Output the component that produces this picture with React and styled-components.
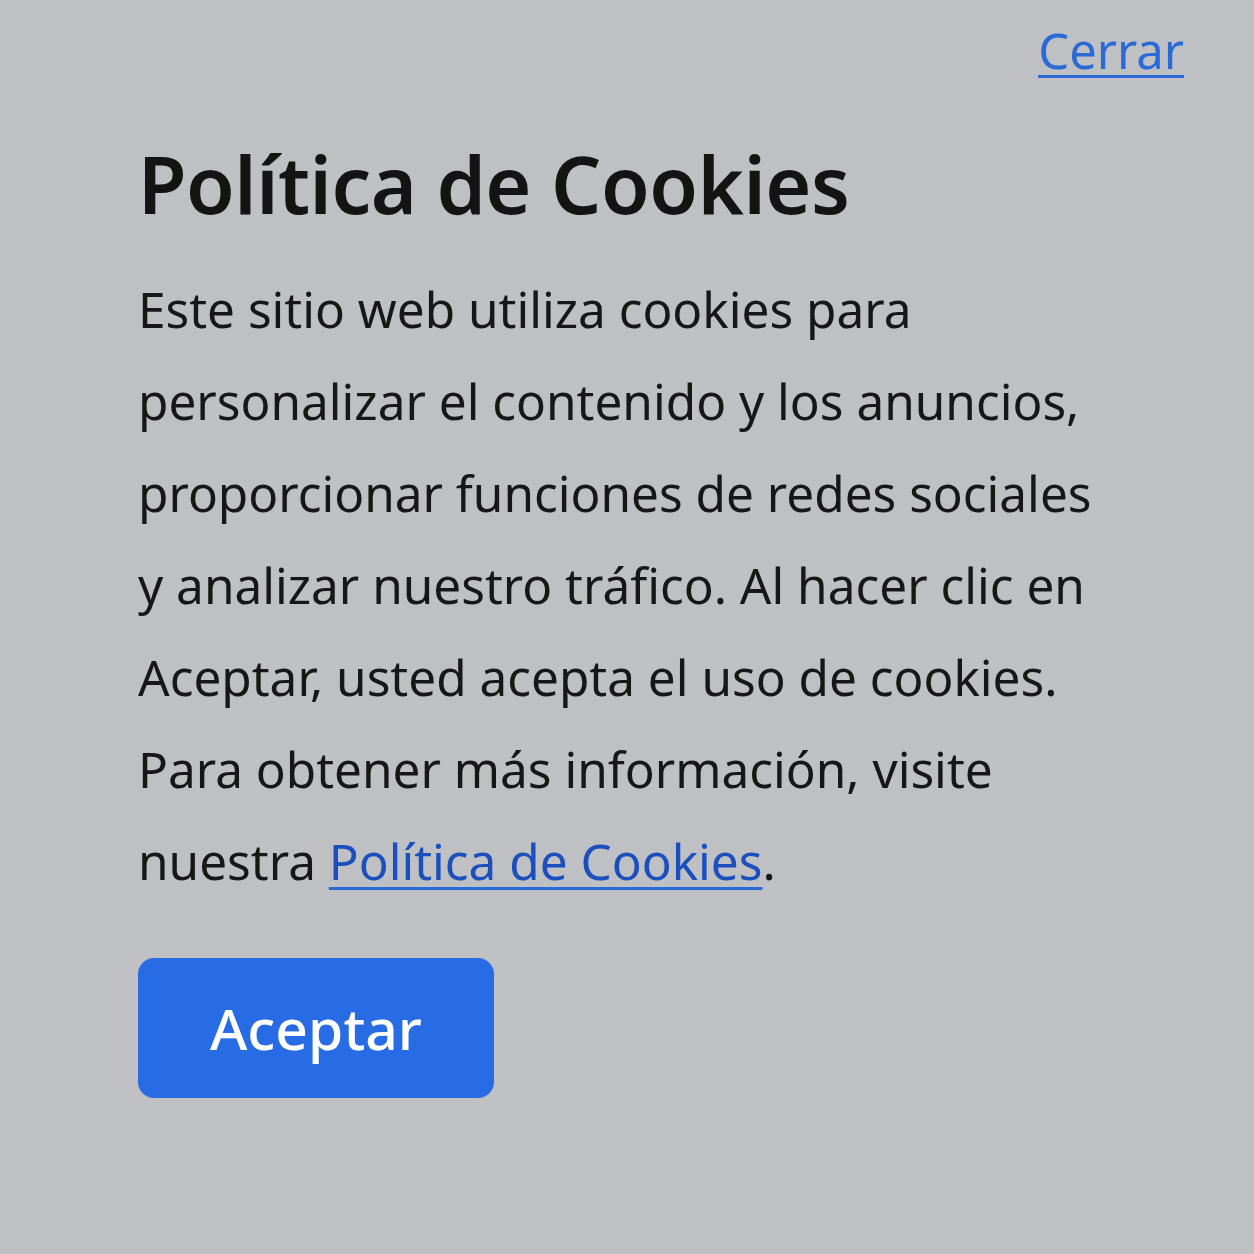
import React from "react";
import styled, { createGlobalStyle } from "styled-components";

const Global = createGlobalStyle`
  html, body { margin: 0; padding: 0; }
  body {
    background: #bfc0c4;
    font-family: "Noto Sans", "Open Sans", "DejaVu Sans", sans-serif;
    color: #161616;
  }
`;

const Page = styled.div`
  width: 1254px;
  height: 1254px;
  box-sizing: border-box;
  display: flex;
  flex-direction: column;
  padding: 14px 70px 0 138px;
`;

const TopBar = styled.div`
  display: flex;
  justify-content: flex-end;
`;

const CloseLink = styled.a`
  font-size: 49px;
  line-height: 72px;
  color: #2a6ad6;
  text-decoration: underline;
  text-decoration-thickness: 3px;
  text-underline-offset: 6px;
  cursor: pointer;
`;

const Title = styled.h1`
  margin: 50px 0 0;
  font-size: 79px;
  font-weight: 600;
  line-height: 96px;
  letter-spacing: -0.5px;
  color: #141414;
`;

const Body = styled.p`
  margin: 31px 0 0;
  font-size: 49.5px;
  line-height: 92px;
  color: #171717;
`;

const InlineLink = styled.a`
  color: #1a4fbd;
  text-decoration: underline;
  text-decoration-thickness: 3px;
  text-underline-offset: 7px;
  text-decoration-color: #2a6ad6;
`;

const AcceptButton = styled.button`
  margin-top: 51px;
  align-self: flex-start;
  width: 356px;
  height: 140px;
  border: none;
  border-radius: 16px;
  background: #276ce5;
  color: #ffffff;
  font-family: inherit;
  font-size: 57px;
  font-weight: 500;
  cursor: pointer;
`;

export default function App() {
  return (
    <>
      <Global />
      <Page>
        <TopBar>
          <CloseLink>Cerrar</CloseLink>
        </TopBar>
        <Title>Política de Cookies</Title>
        <Body>
          Este sitio web utiliza cookies para
          <br />
          personalizar el contenido y los anuncios,
          <br />
          proporcionar funciones de redes sociales
          <br />
          y analizar nuestro tráfico. Al hacer clic en
          <br />
          Aceptar, usted acepta el uso de cookies.
          <br />
          Para obtener más información, visite
          <br />
          nuestra <InlineLink>Política de Cookies</InlineLink>.
        </Body>
        <AcceptButton>Aceptar</AcceptButton>
      </Page>
    </>
  );
}
